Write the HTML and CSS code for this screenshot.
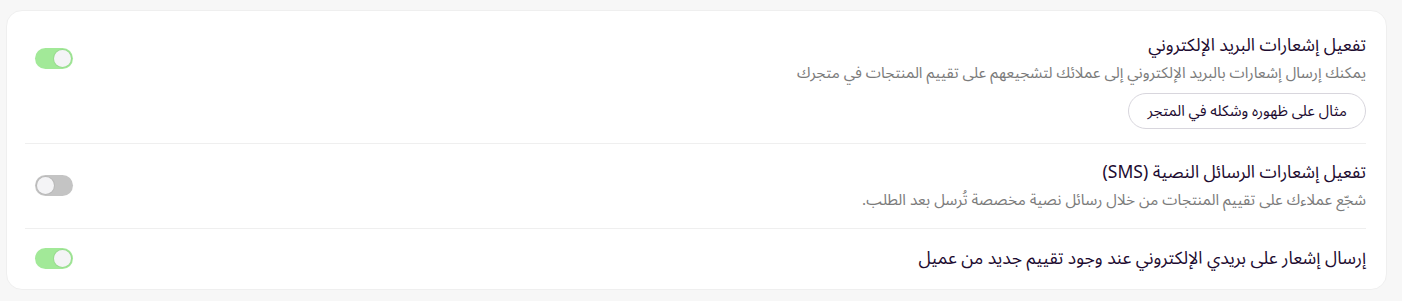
FILE: index.html
```html
<!DOCTYPE html>
<html lang="ar" dir="rtl">
<head>
<meta charset="utf-8">
<title>إعدادات التقييم</title>
<link rel="stylesheet" href="styles.css">
</head>
<body>
<div class="card">
  <div class="row first">
    <div class="head">
      <div class="text">
        <div class="title">تفعيل إشعارات البريد الإلكتروني</div>
        <div class="desc">يمكنك إرسال إشعارات بالبريد الإلكتروني إلى عملائك لتشجيعهم على تقييم المنتجات في متجرك</div>
      </div>
      <span class="toggle on"><span class="knob"></span></span>
    </div>
    <button class="btn">مثال على ظهوره وشكله في المتجر</button>
  </div>
  <div class="row second">
    <div class="head">
      <div class="text">
        <div class="title">تفعيل إشعارات الرسائل النصية (SMS)</div>
        <div class="desc">شجّع عملاءك على تقييم المنتجات من خلال رسائل نصية مخصصة تُرسل بعد الطلب.</div>
      </div>
      <span class="toggle"><span class="knob"></span></span>
    </div>
  </div>
  <div class="row">
    <div class="head">
      <div class="text">
        <div class="title">إرسال إشعار على بريدي الإلكتروني عند وجود تقييم جديد من عميل</div>
      </div>
      <span class="toggle on"><span class="knob"></span></span>
    </div>
  </div>
</div>
</body>
</html>
```
FILE: styles.css
```css
* { box-sizing: border-box; }
html, body { margin: 0; padding: 0; }
body {
  background: #f7f7f7;
  font-family: "Noto Sans Arabic", "Noto Sans", "DejaVu Sans", sans-serif;
  padding: 10px 15px 0 6px;
}
.card {
  background: #ffffff;
  border: 1px solid #efefef;
  border-radius: 16px;
  padding: 4px 20px 0 18px;
}
.row {
  padding: 17px 0 18px;
  border-bottom: 1px solid #efefef;
}
.row.first {
  padding: 18px 0 14px;
}
.row.second {
  padding: 16px 0 17px;
}
.row:last-child { border-bottom: none; }
.head {
  display: flex;
  align-items: center;
  justify-content: space-between;
}
.title {
  font-size: 17.5px;
  line-height: 25px;
  color: #1d0b30;
}
.desc {
  margin-top: 4px;
  font-size: 15.3px;
  line-height: 22px;
  color: #7b7b7b;
}
.toggle {
  display: inline-flex;
  width: 38px;
  height: 21px;
  border-radius: 11px;
  background: #c4c4c4;
  padding: 2px;
  margin-left: 10px;
  justify-content: flex-end;
  flex: none;
}
.toggle.on {
  background: #a2e998;
  justify-content: flex-start;
}
.knob {
  width: 17px;
  height: 17px;
  border-radius: 50%;
  background: #f4f4f6;
  box-shadow: 0 0 0 1px rgba(0,0,0,0.06);
}
.btn {
  margin-top: 9px;
  height: 36px;
  padding: 0 18px;
  border: 1px solid #d8d6dd;
  border-radius: 18px;
  background: #ffffff;
  font-family: inherit;
  font-size: 15px;
  line-height: 20px;
  color: #1d0b30;
  cursor: pointer;
}
```
